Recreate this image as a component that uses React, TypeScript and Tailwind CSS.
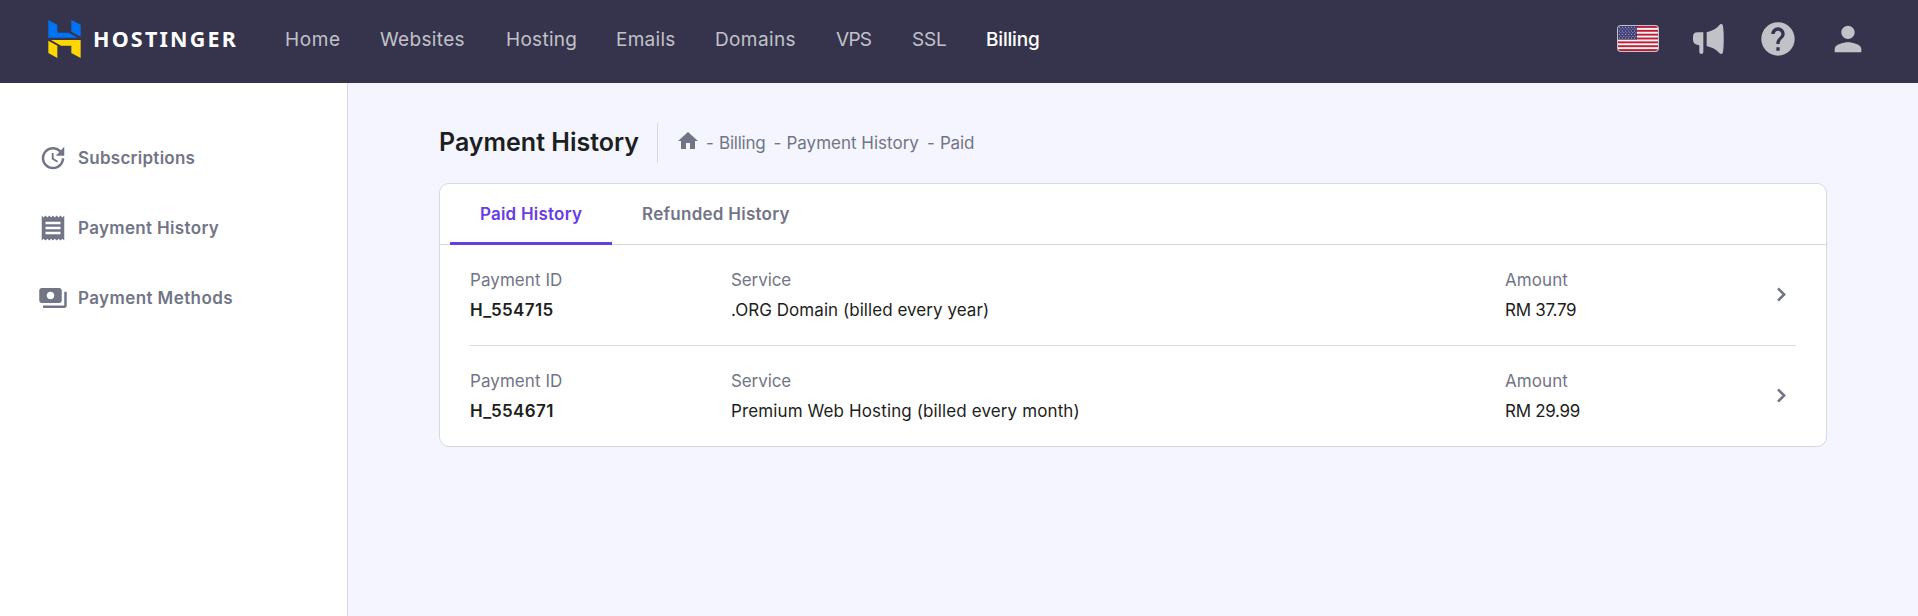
import React from 'react';
import { MdHelp, MdHome, MdPayments, MdPerson, MdReceipt, MdUpdate } from 'react-icons/md';

const navItems = [
  { label: 'Home', style: 'w-[95px] tracking-[0.6px]' },
  { label: 'Websites', style: 'w-[126px] tracking-[0.34px]' },
  { label: 'Hosting', style: 'w-[110px] tracking-[0.28px]' },
  { label: 'Emails', style: 'w-[99px] tracking-[0.28px]' },
  { label: 'Domains', style: 'w-[121px] tracking-[0.38px]' },
  { label: 'VPS', style: 'w-[76px] tracking-[-0.7px]' },
  { label: 'SSL', style: 'w-[74px] tracking-[-0.2px]' },
  { label: 'Billing', style: 'tracking-[-0.18px] font-medium text-white' },
];

const sideItems = [
  { label: 'Subscriptions', Icon: MdUpdate, style: 'tracking-[0.26px]' },
  { label: 'Payment History', Icon: MdReceipt, style: 'tracking-[0.34px]' },
  { label: 'Payment Methods', Icon: MdPayments, style: 'tracking-[0.41px]' },
];

const payments = [
  { id: 'H_554715', service: '.ORG Domain (billed every year)', serviceStyle: 'tracking-[0.05px]', amount: 'RM 37.79' },
  { id: 'H_554671', service: 'Premium Web Hosting (billed every month)', serviceStyle: 'tracking-[0.12px]', amount: 'RM 29.99' },
];

function Logo() {
  return (
    <div className="flex items-center">
      <svg className="h-[38px] w-[33px]" viewBox="0 0 97 114">
        <path fill="#0073f5" d="M0 0l27 14v24h34l27 15H0zM69 0l28 14v36L69 35z" />
        <path fill="#ffd600" d="M0 62l27 15v37L0 99zM8 60h89v54l-28-15V77H38z" />
      </svg>
      <span className="ml-3 font-['Noto_Sans',sans-serif] text-[21.5px] leading-none font-bold tracking-[2.2px] text-white">
        HOSTINGER
      </span>
    </div>
  );
}

function Flag() {
  const stripes = [0, 2, 4, 6, 8, 10, 12];
  const rows = [0, 1, 2, 3, 4, 5, 6];
  const cols = [0, 1, 2, 3, 4, 5];
  return (
    <svg className="mb-[2px] h-[27px] w-[42px]" viewBox="0 0 42 27">
      <defs>
        <clipPath id="flag">
          <rect x="1" y="1" width="40" height="25" rx="3" />
        </clipPath>
      </defs>
      <rect width="42" height="27" rx="4" fill="#c1c2c8" />
      <g clipPath="url(#flag)">
        <rect width="42" height="27" fill="#f5f5f5" />
        {stripes.map((s) => (
          <rect key={s} x="0" y={1 + (s * 25) / 13} width="42" height={25 / 13} fill="#bf1e37" />
        ))}
        <rect x="0" y="0" width="20" height="14.5" fill="#3f3d75" />
        {rows.map((r) =>
          cols.map((c) => (
            <circle key={`${r}-${c}`} cx={2.4 + c * 3 + (r % 2) * 1.5} cy={2.3 + r * 1.8} r="0.5" fill="#d5d5e5" />
          )),
        )}
      </g>
    </svg>
  );
}

function Megaphone() {
  return (
    <svg className="h-[30px] w-[31px]" viewBox="0 0 93 90" fill="currentColor">
      <path d="M13 25H31V84c0 8-12 8-12 0V66c0-2-1-3-3-3C6 62 0 57 0 47V38C0 29 5 25 13 25z" />
      <path d="M41 25C58 20 70 14 80 2c4-4 9-2 10 4 3 24 3 54 0 78-1 6-7 8-11 3C69 76 57 70 41 66z" />
    </svg>
  );
}

function Crumb({ label, gap, tracking }: { label: string; gap: string; tracking: string }) {
  return (
    <span className={`flex pt-[2px] ${gap}`}>
      <span className="w-[13px] tracking-normal">-</span>
      <span className={tracking}>{label}</span>
    </span>
  );
}

export default function App() {
  return (
    <div className="flex h-[616px] flex-col bg-[#f4f5ff] font-[Inter,'Liberation_Sans',sans-serif] text-[17px] text-[#727586]">
      <header className="flex h-[83px] shrink-0 items-center bg-[#36344d] pr-[50px] pb-[5px] pl-12 text-[#c1c2c8]">
        <div className="w-[237px]">
          <Logo />
        </div>
        <nav className="flex flex-1 pt-[2px] text-[19px] leading-6">
          {navItems.map((item) => (
            <a key={item.label} className={`whitespace-nowrap ${item.style}`}>
              {item.label}
            </a>
          ))}
        </nav>
        <div className="flex items-center">
          <Flag />
          <span className="ml-[34px]">
            <Megaphone />
          </span>
          <MdHelp className="ml-[34px] size-10" />
          <MdPerson className="ml-[30px] size-10" />
        </div>
      </header>

      <div className="flex flex-1">
        <aside className="w-[348px] border-r border-[#d8d8de] bg-white pt-10">
          {sideItems.map(({ label, Icon, style }) => (
            <a key={label} className="flex h-[70px] items-center pl-[38px] font-semibold">
              <Icon className="size-[30px]" />
              <span className={`ml-[10px] pt-[2px] ${style}`}>{label}</span>
            </a>
          ))}
        </aside>

        <main className="flex-1 px-[91px] pt-10">
          <div className="flex h-10 items-center">
            <h1 className="w-[218px] text-[25px] font-semibold whitespace-nowrap text-[#1d1e20]">
              Payment History
            </h1>
            <div className="h-10 w-px bg-[#d8d9dc]" />
            <div className="ml-[18px] flex items-center">
              <MdHome className="mb-1 size-6" />
              <Crumb label="Billing" gap="ml-[6px]" tracking="tracking-[-0.23px]" />
              <Crumb label="Payment History" gap="ml-[8px]" tracking="" />
              <Crumb label="Paid" gap="ml-[8px]" tracking="tracking-[-0.17px]" />
            </div>
          </div>

          <section className="mt-5 rounded-[10px] border border-[#d8d9dc] bg-white">
            <div className="flex h-[61px] border-b border-[#d8d9dc] pl-[10px] font-semibold">
              <a className="-mb-px flex h-[61px] w-[162px] items-center justify-center border-b-[3px] border-[#673de6] pt-1 tracking-[0.22px] text-[#673de6]">
                Paid History
              </a>
              <a className="flex h-[60px] items-center pt-[2px] pl-[30px] tracking-[0.26px]">Refunded History</a>
            </div>
            <div className="mx-[30px] divide-y divide-[#d8d9dc]">
              {payments.map((p) => (
                <div key={p.id} className="flex items-center py-5 leading-[30px]">
                  <div className="w-[261px]">
                    <div className="tracking-[0.06px]">Payment ID</div>
                    <div className="font-semibold tracking-[0.4px] text-[#1d1e20]">{p.id}</div>
                  </div>
                  <div className="w-[774px]">
                    <div className="tracking-[-0.1px]">Service</div>
                    <div className={`text-[#1d1e20] ${p.serviceStyle}`}>{p.service}</div>
                  </div>
                  <div className="flex-1">
                    <div className="tracking-[0.08px]">Amount</div>
                    <div className="tracking-[-0.3px] text-[#1d1e20]">{p.amount}</div>
                  </div>
                  <svg className="mr-[10px] mb-[1px] h-[15px] w-[9px]" viewBox="0 0 9 15" fill="none" stroke="currentColor" strokeWidth="2.6">
                    <path d="M1 1.3L7.2 7.5L1 13.7" />
                  </svg>
                </div>
              ))}
            </div>
          </section>
        </main>
      </div>
    </div>
  );
}
